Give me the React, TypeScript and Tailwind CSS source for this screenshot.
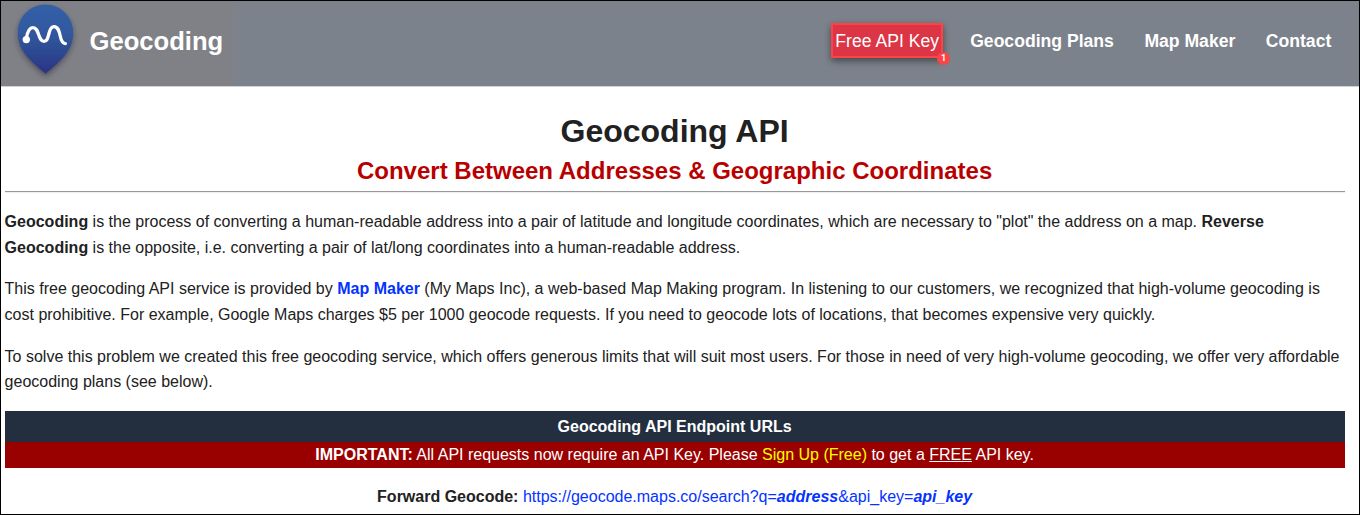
import React from "react";

function LogoPin() {
  return (
    <svg width="70" height="80" viewBox="0 0 70 80" className="shrink-0">
      <defs>
        <linearGradient id="pin" x1="0" y1="0" x2="0" y2="1">
          <stop offset="0" stopColor="#345fa6" />
          <stop offset="0.4" stopColor="#3259a0" />
          <stop offset="0.65" stopColor="#2c4c93" />
          <stop offset="0.85" stopColor="#2d3d8c" />
          <stop offset="1" stopColor="#2c3180" />
        </linearGradient>
        <filter id="pinShadow" x="-30%" y="-20%" width="160%" height="150%">
          <feDropShadow dx="0" dy="3" stdDeviation="2.5" floodColor="#20242c" floodOpacity="0.5" />
        </filter>
      </defs>
      <path
        d="M35.5 3.5C51 3.5 63.3 16 63.3 31.5C63.3 42.5 58.5 51 51 58.7C46.3 63.7 40.5 68.5 35.5 72.5C30.5 68.5 24.7 63.7 20 58.7C12.5 51 7.7 42.5 7.7 31.5C7.7 16 20 3.5 35.5 3.5Z"
        fill="url(#pin)"
        filter="url(#pinShadow)"
      />
      <path
        d="M16.3 37.5C17.3 31.5 19 26.6 22.9 26.6C26.3 26.6 27.3 29.8 28.5 33.2C30 37.5 31 40.4 34 40.4C37.2 40.4 37.8 36.8 39 32.3C40 28.3 41 25.6 44 25.6C48 25.6 49.1 29.8 50.1 34.5C51 39 52 42.6 55.4 42.6"
        fill="none"
        stroke="#fff"
        strokeWidth="3.3"
        strokeLinecap="round"
      />
      <circle cx="16.3" cy="38.6" r="3.7" fill="#fff" />
    </svg>
  );
}

function Header() {
  return (
    <header className="flex h-[86px] shrink-0 items-start border-b border-[#d2d2d4] bg-[#7c828b] bg-linear-to-r from-[#808187] from-[231px] to-[#7c828b] to-[235px] pr-[27.7px] pl-[9px] text-white">
      <LogoPin />
      <span className="ml-[9.5px] pt-[24px] text-[25.6px] leading-8 font-bold">Geocoding</span>
      <nav className="ml-auto flex items-start pt-[22px] text-[17.6px] leading-9 font-bold">
        <a className="relative mr-[27px] flex h-[35px] w-[112px] items-center justify-center border-2 border-[#ff4245] bg-[#dc3545] font-normal whitespace-nowrap shadow-[0_3px_7px_rgba(0,0,0,0.45)]">
          Free API Key
          <span className="absolute -right-[9px] -bottom-[9px] flex size-[13px] items-center justify-center rounded-full bg-[#ff4245] font-[Roboto] text-[9px] leading-none font-bold">
            1
          </span>
        </a>
        <a className="mr-[30.5px]">Geocoding Plans</a>
        <a className="mr-[30.5px]">Map Maker</a>
        <a>Contact</a>
      </nav>
    </header>
  );
}

export default function App() {
  return (
    <div className="flex h-[515px] w-[1360px] flex-col overflow-hidden border border-black bg-white font-['Liberation_Sans',Arial,sans-serif] text-base leading-[25.6px] text-[#212121]">
      <Header />
      <main className="pr-[14.4px] pl-[3.6px]">
        <h1 className="mt-[23px] text-center text-[32px] leading-[42px] font-bold">Geocoding API</h1>
        <h2 className="text-center text-2xl leading-[38px] font-bold text-[#b90000]">
          Convert Between Addresses &amp; Geographic Coordinates
        </h2>
        <hr className="mt-px mb-4 h-[2px] border-t border-b border-t-[#999] border-b-[#eee]" />
        <p className="mb-4">
          <b>Geocoding</b> is the process of converting a human-readable address into a pair of latitude and longitude
          coordinates, which are necessary to "plot" the address on a map. <b>Reverse Geocoding</b> is the opposite,
          i.e. converting a pair of lat/long coordinates into a human-readable address.
        </p>
        <p className="mb-[16.3px]">
          This free geocoding API service is provided by <a className="font-bold text-[#0433ff]">Map Maker</a> (My Maps
          Inc), a web-based Map Making program. In listening to our customers, we recognized that high-volume geocoding
          is cost prohibitive. For example, Google Maps charges $5 per 1000 geocode requests. If you need to geocode lots
          of locations, that becomes expensive very quickly.
        </p>
        <p className="mb-4">
          To solve this problem we created this free geocoding service, which offers generous limits that will suit most
          users. For those in need of very high-volume geocoding, we offer very affordable geocoding plans (see below).
        </p>
        <section className="text-center">
          <h3 className="h-[31px] bg-[#232f3e] leading-[31px] font-bold text-white">Geocoding API Endpoint URLs</h3>
          <p className="mb-4 bg-[#900] pb-[0.5px] text-white">
            <b>IMPORTANT:</b> All API requests now require an API Key. Please{" "}
            <a className="text-[#ff0]">Sign Up (Free)</a> to get a <u>FREE</u> API key.
          </p>
          <p>
            <b>Forward Geocode:</b>{" "}
            <a className="text-[#0433ff]">
              https://geocode.maps.co/search?q=<b><i>address</i></b>&amp;api_key=<b><i>api_key</i></b>
            </a>
          </p>
        </section>
      </main>
    </div>
  );
}
